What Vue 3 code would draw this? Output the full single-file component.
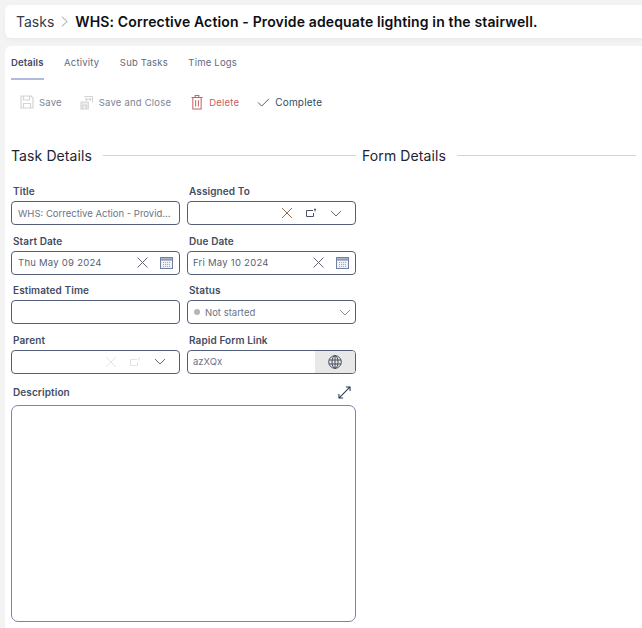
<script setup>
const tabs = ['Details', 'Activity', 'Sub Tasks', 'Time Logs']
</script>

<template>
  <div class="page">
    <header class="crumbs">
      <span class="root">Tasks</span>
      <svg class="sep" width="7" height="13" viewBox="0 0 8 13"><path d="M1 1l6 5.500L1 12" fill="none" stroke="#8a8f9c" stroke-width="1" /></svg>
      <h1>WHS: Corrective Action - Provide adequate lighting in the stairwell.</h1>
    </header>

    <main class="card">
      <nav class="tabs">
        <a v-for="(t, i) in tabs" :key="t" :class="{ active: i === 0 }">{{ t }}</a>
      </nav>

      <div class="toolbar">
        <button class="off save">
          <svg width="14" height="14" viewBox="0 0 14 14" fill="none" stroke="#d4d4d4" stroke-width="1.200"><path d="M1 1h10l2 2v10H1z" /><path d="M3.500 1v4h6V1M3.500 13V8.500h7V13" /></svg>
          Save
        </button>
        <button class="off close">
          <svg width="13" height="15" viewBox="0 0 14 15" fill="none" stroke="#d4d4d4" stroke-width="1.100"><path d="M4.500 1h9v6.500" /><path d="M6 4h6M10.500 2.500 12 4l-1.500 1.500M7.500 2.500 6 4l1.500 1.500" /><path d="M1 7h8v7.500H1z" fill="#eee" /><path d="M3 14.500V10.500h4v4" /></svg>
          Save and Close
        </button>
        <button class="del">
          <svg width="12" height="16" viewBox="0 0 13 16" fill="none" stroke="#c8605f" stroke-width="1.100"><path d="M.5 3h12M4.500 3V1h4v2M2 3v12.500h9V3M5 6v7M8 6v7" /></svg>
          Delete
        </button>
        <button class="done">
          <svg width="13" height="9" viewBox="0 0 14 10" fill="none" stroke="#2f5567" stroke-width="1"><path d="M1 5l4 4 8-8" /></svg>
          Complete
        </button>
      </div>

      <div class="columns">
        <section class="task">
          <div class="heading"><h2>Task Details</h2><i></i></div>

          <div class="grid">
            <div class="field">
              <label>Title</label>
              <div class="box"><span class="val">WHS: Corrective Action - Provid...</span></div>
            </div>
            <div class="field">
              <label>Assigned To</label>
              <div class="box multi">
                <span class="val"></span>
                <svg class="ic" width="12" height="12" viewBox="0 0 12 12" fill="none" stroke="#9a6a58"><path d="M1 1l10 10M11 1 1 11" /></svg>
                <svg class="ic" width="11" height="10" viewBox="0 0 11 10" fill="none" stroke="#4a5368"><path d="M7 2.500H.5v6h7V5M9 .5v3M8 1.500h2" /></svg>
                <svg class="ic" width="12" height="7" viewBox="0 0 12 7" fill="none" stroke="#5f6779"><path d="M1 1l5 5 5-5" /></svg>
              </div>
            </div>

            <div class="field">
              <label>Start Date</label>
              <div class="box">
                <span class="val date">Thu May 09 2024</span>
                <svg class="ic" width="11" height="11" viewBox="0 0 11 11" fill="none" stroke="#5f6779"><path d="M.5.500l10 10M10.500.500l-10 10" /></svg>
                <svg class="ic cal" width="13" height="13" viewBox="0 0 13 13" fill="none" stroke="#6f80a0"><rect x=".5" y="1.500" width="12" height="11" fill="#f1f3f8" /><path d="M.5 1.500h12v2.500H.5z" fill="#a9b5cc" /><path d="M3 6.500h7M3 8.500h7M3 10.500h7" stroke="#9aa6bd" stroke-dasharray="1 1" /></svg>
              </div>
            </div>
            <div class="field">
              <label>Due Date</label>
              <div class="box right">
                <span class="val date">Fri May 10 2024</span>
                <svg class="ic" width="11" height="11" viewBox="0 0 11 11" fill="none" stroke="#5f6779"><path d="M.5.500l10 10M10.500.500l-10 10" /></svg>
                <svg class="ic cal" width="13" height="13" viewBox="0 0 13 13" fill="none" stroke="#6f80a0"><rect x=".5" y="1.500" width="12" height="11" fill="#f1f3f8" /><path d="M.5 1.500h12v2.500H.5z" fill="#a9b5cc" /><path d="M3 6.500h7M3 8.500h7M3 10.500h7" stroke="#9aa6bd" stroke-dasharray="1 1" /></svg>
              </div>
            </div>

            <div class="field">
              <label>Estimated Time</label>
              <div class="box"></div>
            </div>
            <div class="field">
              <label>Status</label>
              <div class="box single">
                <span class="dot"></span>
                <span class="val">Not started</span>
                <svg class="ic" width="12" height="7" viewBox="0 0 12 7" fill="none" stroke="#8d93a3"><path d="M1 1l5 5 5-5" /></svg>
              </div>
            </div>

            <div class="field">
              <label>Parent</label>
              <div class="box multi">
                <span class="val"></span>
                <svg class="ic" width="12" height="12" viewBox="0 0 12 12" fill="none" stroke="#dfe3ee"><path d="M1 1l10 10M11 1 1 11" /></svg>
                <svg class="ic" width="11" height="10" viewBox="0 0 11 10" fill="none" stroke="#dfe3ee"><path d="M7 2.500H.5v6h7V5M9 .5v3M8 1.500h2" /></svg>
                <svg class="ic" width="12" height="7" viewBox="0 0 12 7" fill="none" stroke="#5f6779"><path d="M1 1l5 5 5-5" /></svg>
              </div>
            </div>
            <div class="field">
              <label>Rapid Form Link</label>
              <div class="box link right">
                <span class="val">azXQx</span>
                <span class="globe">
                  <svg width="14" height="14" viewBox="0 0 14 14" fill="none" stroke="#3a4254" stroke-width=".9"><circle cx="7" cy="7" r="6.300" /><ellipse cx="7" cy="7" rx="3" ry="6.300" /><path d="M7 .7v12.600M1 5h12M1 9h12" /></svg>
                </span>
              </div>
            </div>
          </div>

          <div class="desc-head">
            <label>Description</label>
            <svg class="expand" width="13" height="13" viewBox="0 0 14 14" fill="none" stroke="#26384c" stroke-width="1.100"><path d="M1 13 13 1M8.500 1H13v4.500M1 8.500V13h4.500" /></svg>
          </div>
          <div class="box desc"></div>
        </section>

        <section class="form">
          <div class="heading"><h2>Form Details</h2><i></i></div>
        </section>
      </div>
    </main>
  </div>
</template>

<style scoped>
.page {
  width: 642px;
  height: 628px;
  overflow: hidden;
  background: #f3f3f3;
  padding: 5px 0 0 5px;
  box-sizing: border-box;
  font-family: Inter, "Liberation Sans", sans-serif;
  color: #1c2433;
}
.crumbs {
  height: 33px;
  background: #fff;
  border-radius: 6px 0 0 6px;
  box-shadow: 0 2px 4px rgba(0, 0, 0, 0.04);
  display: flex;
  align-items: center;
  padding-left: 11px;
  gap: 7px;
  box-sizing: border-box;
}
.root {
  font-size: 14px;
  color: #333a48;
}
h1 {
  margin: 0;
  font-size: 14px;
  letter-spacing: 0.14px;
  font-weight: 600;
  color: #0d0f14;
  white-space: nowrap;
}
.card {
  margin-top: 8px;
  height: 600px;
  background: #fff;
  border-radius: 6px 0 0 0;
  padding: 0 6px;
}
.tabs {
  display: flex;
  gap: 20.500px;
  padding-top: 10px;
}
.tabs a {
  font-size: 9.500px;
  letter-spacing: 0.2px;
  line-height: 13px;
  padding-bottom: 9px;
  color: #5f6a80;
  border-bottom: 2px solid transparent;
}
.tabs a.active {
  color: #414b63;
  font-weight: 600;
  letter-spacing: 0.15px;
  border-bottom-color: #aebbdc;
}
.toolbar {
  display: flex;
  gap: 18px;
  height: 16px;
  padding: 14px 0 0 9px;
}
.toolbar button {
  display: flex;
  align-items: center;
  gap: 6px;
  padding: 0;
  border: 0;
  background: none;
  font: inherit;
  font-size: 9.500px;
  letter-spacing: 0.2px;
  line-height: 15px;
}
.toolbar .save { gap: 5px; }
.off { color: #7d8494; }
.toolbar .del {
  color: #c8605f;
  margin-left: 2px;
}
.toolbar .done {
  color: #2f4b5c;
  gap: 5px;
  font-size: 10px;
}
.columns {
  display: flex;
  gap: 6px;
  margin-top: 37px;
}
.task { width: 345px; flex: none; }
.form { flex: 1; }
.heading {
  display: flex;
  align-items: center;
  gap: 11px;
  height: 16px;
}
.heading h2 {
  margin: 0;
  font-size: 14px;
  letter-spacing: 0.1px;
  font-weight: 400;
  white-space: nowrap;
}
.heading i {
  flex: 1;
  height: 1px;
  background: #cdd4e4;
}
.grid {
  display: grid;
  grid-template-columns: 169px 169px;
  gap: 5.500px 7px;
  margin-top: 18px;
}
.field label, .desc-head label {
  display: block;
  font-size: 10px;
  letter-spacing: 0.1px;
  font-weight: 600;
  line-height: 20px;
  padding-left: 2px;
  color: #434c63;
}
.box {
  box-sizing: border-box;
  height: 24px;
  border: 1px solid #545e7b;
  border-radius: 4px;
  display: flex;
  align-items: center;
  padding: 0 6px;
  gap: 11px;
  background: #fff;
}
.box.multi {
  gap: 13px;
  padding-right: 13px;
}
.box.right { padding-left: 5px; }
.box.single { padding-right: 4px; }
.val {
  flex: 1;
  min-width: 0;
  font-size: 9.500px;
  color: #6c7385;
  white-space: nowrap;
  overflow: hidden;
}
.val.date {
  color: #565f78;
  letter-spacing: 0.25px;
}
.ic { flex: none; }
.cal { margin-left: 1px; }
.dot {
  width: 6px;
  height: 6px;
  border-radius: 50%;
  background: #b5b5b5;
  margin-right: -6px;
}
.link { padding-right: 0; overflow: hidden; }
.globe {
  width: 40px;
  height: 22px;
  background: #e8e8e8;
  display: flex;
  align-items: center;
  justify-content: center;
}
.desc-head {
  display: flex;
  justify-content: space-between;
  align-items: center;
  height: 22px;
  padding-right: 5px;
  margin-top: 7px;
}
.expand { margin-top: 2px; }
.box.desc {
  height: 217px;
  margin-top: 2px;
  width: 345px;
  border-color: #7a84a3;
  border-radius: 7px;
}
</style>
